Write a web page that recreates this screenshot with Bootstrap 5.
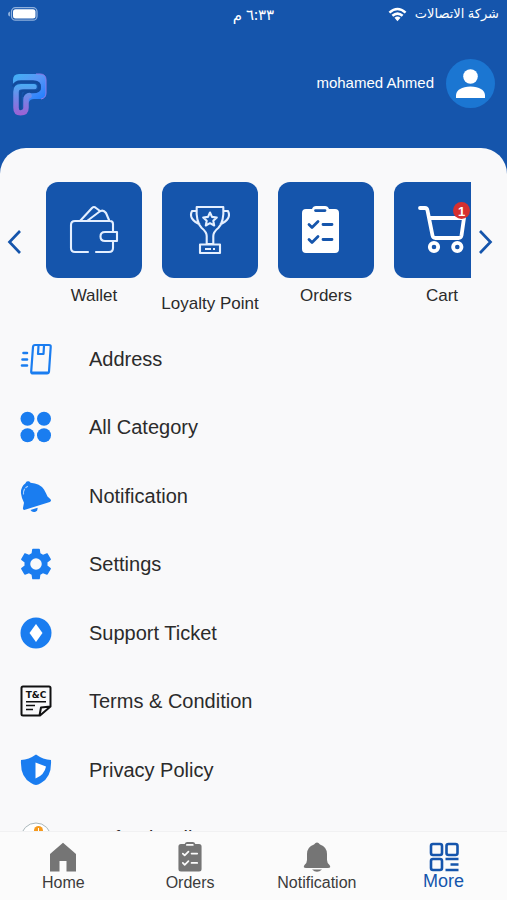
<!DOCTYPE html>
<html lang="en">
<head>
<meta charset="utf-8">
<meta name="viewport" content="width=device-width, initial-scale=1">
<title>More</title>
<link href="https://cdn.jsdelivr.net/npm/bootstrap@5.3.0/dist/css/bootstrap.min.css" rel="stylesheet">
<style>
  :root { --brand: #1555ac; --accent: #1a7df0; --page: #f9f9fa; }
  body { font-family: "Liberation Sans", Arial, sans-serif; background: var(--page); color: #2b2b2b; }
  a { color: inherit; text-decoration: none; }
  svg { display: block; flex: none; overflow: visible; }
  .brand-bg { background: var(--brand); }
  .status-bar { height: 28px; padding: 0 8px; font-family: "Noto Sans", "DejaVu Sans", sans-serif; font-size: 13px; }
  .status-time { font-size: 15px; }
  .top-bar { height: 110px; padding: 0 12px; font-size: 15px; }
  .sheet { background: var(--page); border-radius: 26px 26px 0 0; padding-top: 34px; margin-top: 10px; }
  .arrow { color: var(--brand); width: 46px; height: 120px; padding: 0 0 0 8px; }
  .arrow-next { width: 36px; }
  .tiles { gap: 20px; height: 142px; }
  .tile { width: 96px; flex: none; font-size: 17px; line-height: 20px; }
  .tile-face { height: 96px; border-radius: 12px; margin-bottom: 8px; background: var(--brand); color: #fff; }
  .tile-low { margin-bottom: 16px; }
  .count { position: absolute; top: 20px; left: 59px; width: 17px; height: 17px; border-radius: 50%; background: #d5302f; font-size: 13px; font-weight: 700; line-height: 19px; }
  .menu-row { height: 69px; padding-left: 20px; gap: 37px; font-size: 20px; }
  .menu-row svg { color: var(--accent); }
  .menu li:nth-child(even) .menu-row { height: 68px; }
  .tabs { height: 69px; border-top: 1px solid #f1f1f2; background: #fbfbfb; font-size: 16px; line-height: 20px; color: #3c3c3c; }
  .tabs a { padding-top: 10px; }
  .tabs svg { color: #757575; margin-bottom: 1px; }
  .tabs .current { color: var(--brand); font-size: 18px; line-height: 18px; }
  .tabs .current svg { color: var(--brand); margin-bottom: 0; }
</style>
</head>
<body class="vh-100 d-flex flex-column overflow-hidden">
<svg width="0" height="0" class="position-absolute" aria-hidden="true">
  <symbol id="clipboard" viewBox="0 0 37 48">
    <path fill="currentColor" d="M4 3h6q1-3 4-3h9q3 0 4 3h6q4 0 4 4v36q0 4-4 4H4q-4 0-4-4V7q0-4 4-4z"/>
    <g fill="none" stroke="var(--hole)" stroke-width="2.8" stroke-linecap="round" stroke-linejoin="round"><path d="M13.500 4.600h9.500M7 18.500l3 3 6-6M21 18.500h9M7 33.500l3 3 6-6M21 33.500h9"/></g>
  </symbol>
</svg>

<header class="brand-bg text-white">
  <div class="status-bar row g-0 align-items-center" dir="rtl">
    <div class="col d-flex align-items-center gap-2" lang="ar">
      <span>شركة الاتصالات</span>
      <svg width="19" height="15" viewBox="0 0 20 15" fill="none" stroke="#fff" stroke-width="2.700"><path d="M1.500 5.500Q10-2 18.500 5.500M4.600 8.800q5.400-4.600 10.800 0"/><path fill="#fff" stroke="none" d="M10 14.500 6.800 11q3.200-2.600 6.400 0z"/></svg>
    </div>
    <div class="col-auto status-time" lang="ar">٦:٣٣ م</div>
    <div class="col d-flex justify-content-end">
      <svg width="30" height="14" viewBox="0 0 30 14"><rect x="3.500" y=".7" width="25.500" height="12.500" rx="4" fill="none" stroke="#8fb0dc" stroke-width="1.300"/><rect x="5" y="2.300" width="22.500" height="9.300" rx="2.500" fill="#fff"/><path d="M2 4.500v5Q0 9 0 7t2-2.500z" fill="#8fb0dc"/></svg>
    </div>
  </div>
  <div class="top-bar d-flex align-items-center justify-content-between">
    <svg width="36" height="44" viewBox="0 0 36 44" class="mt-4" role="img" aria-label="P">
      <defs>
        <linearGradient id="lg1" x1="0" y1="0" x2=".7" y2="1"><stop offset="0" stop-color="#3fb2f5"/><stop offset=".45" stop-color="#5a96f6"/><stop offset="1" stop-color="#1c7cff"/></linearGradient>
        <linearGradient id="lg2" gradientUnits="userSpaceOnUse" x1="0" y1="9" x2="0" y2="43"><stop offset="0" stop-color="#45b1f6"/><stop offset=".5" stop-color="#7484e6"/><stop offset="1" stop-color="#a05fd2"/></linearGradient>
      </defs>
      <path fill="url(#lg1)" d="M1 12V7Q1 1 7 1h21q6 0 6 6v13q0 6-6 6h-6q-4 0-5 3l-5 5V25q0-6 6-6h7q4 0 4-4v-1q0-6-6-6H9Q4 8 1 12z"/>
      <path fill="none" stroke="#8d7cea" stroke-width="1" d="M24 1h4q6 0 6 6v13q0 5-5 6"/>
      <path fill="none" stroke="#124a9c" stroke-width="2.600" d="M1 13.500Q3 8.500 9 8.500h12q6.500 0 6.500 5.200T21 19h-4q-5 0-5.500 5"/>
      <path fill="none" stroke="url(#lg2)" stroke-width="5.500" stroke-linecap="round" stroke-linejoin="round" d="M22 13.700H9q-5 0-5 5v16q0 5 4.500 5 5.500 0 5.500-5v-8q0-3 3-4"/>
      <path fill="none" stroke="#124a9c" stroke-width="2.400" stroke-linecap="round" d="M23 17.600H12q-3.500 0-3.500 3.500v15"/>
    </svg>
    <a href="#" class="d-flex align-items-center gap-2">
      <span class="me-1">mohamed Ahmed</span>
      <svg width="49" height="49" viewBox="0 0 49 49"><circle cx="24.500" cy="24.500" r="24.500" fill="#1b76d2"/><circle cx="24.500" cy="17.500" r="7.300" fill="#fff"/><path fill="#fff" d="M10 39v-3q1-8 14.500-8.500Q38 28 39 36v3z"/></svg>
    </a>
  </div>
</header>

<main class="brand-bg flex-fill overflow-hidden">
  <div class="sheet">
    <section class="d-flex align-items-start" aria-label="Shortcuts">
      <button type="button" class="btn arrow border-0 rounded-0 flex-shrink-0 d-flex align-items-center" aria-label="Previous"><svg width="13" height="24" viewBox="0 0 13 24" fill="none" stroke="currentColor" stroke-width="2.700"><path d="M12 1 1.500 12 12 23"/></svg></button>
      <div class="tiles d-flex flex-fill overflow-hidden text-center text-nowrap">
        <a href="#" class="tile"><div class="tile-face d-flex align-items-center justify-content-center">
          <svg width="48" height="48" viewBox="0 0 48 48" fill="none" stroke="#e4efff" stroke-width="2.100" stroke-linecap="round" stroke-linejoin="round"><path d="M18 46H5q-4 0-4-4V19q0-4 4-4h35q3 0 3 3v8M43 35v7q0 4-4 4H26M47 26v9H35q-4.500 0-4.500-4.500T35 26zM10 15 22 2q2-2 4 0l4 3M17 15 29 6q4-3 7 1l3 7"/></svg></div>Wallet</a>
        <a href="#" class="tile"><div class="tile-face tile-low d-flex align-items-center justify-content-center">
          <svg width="48" height="48" viewBox="0 0 48 48" fill="none" stroke="#e4efff" stroke-width="2.100" stroke-linejoin="round"><path d="M10.700 1h26.600q1 15-5 21-5 4-5 8v8h-6.600v-8q0-4-5-8-6-6-5-21zM10.700 5H6Q2 13 14 18.500M37.300 5H42q4 8-8 13.500M14 38.500h20V47H14zM24 6.500l2 4.400 4.800.6-3.500 3.300.9 4.700-4.200-2.300-4.200 2.300.9-4.700-3.500-3.300 4.800-.6z"/><path d="M19 43h6M27 43h2" stroke-width="2"/></svg></div><span class="d-flex justify-content-center">Loyalty Point</span></a>
        <a href="#" class="tile"><div class="tile-face d-flex align-items-center justify-content-center">
          <svg width="48" height="48" viewBox="0 0 48 48"><use href="#clipboard" width="37" height="48" style="--hole:#1555ac"/></svg></div>Orders</a>
        <a href="#" class="tile"><div class="tile-face d-flex align-items-center justify-content-center position-relative">
          <svg width="48" height="48" viewBox="0 0 48 48" fill="none" stroke="#fff" stroke-width="3.800" stroke-linecap="round" stroke-linejoin="round"><path d="M2 2h5q2 0 2.500 2.500l5 25q.5 2.500 3 2.500h23q2.500 0 3-2.500L46 12H11"/><circle cx="16" cy="41" r="4.200"/><circle cx="39.300" cy="41" r="4.200"/></svg>
          <span class="count">1</span></div>Cart</a>
      </div>
      <button type="button" class="btn arrow arrow-next border-0 rounded-0 flex-shrink-0 d-flex align-items-center" aria-label="Next"><svg width="13" height="24" viewBox="0 0 13 24" fill="none" stroke="currentColor" stroke-width="2.700"><path d="M1 1l10.500 11L1 23"/></svg></button>
    </section>

    <ul class="menu list-unstyled mb-0">
      <li><a href="#" class="menu-row d-flex align-items-center"><svg width="32" height="32" viewBox="0 0 32 32" fill="none" stroke="currentColor" stroke-width="2.200" stroke-linejoin="round" stroke-linecap="round"><path d="M15 2h14q2 0 1.700 2L29 28.500q-.2 2-2 2H13q-2 0-1.800-2L13 4q.2-2 2-2zM12 29.500h16.500M18.500 3 18 11h5.500L24 3"/><path stroke-width="2.600" d="M3.500 10H7M2.500 16.500H7M2 22.500h5"/></svg>Address</a></li>
      <li><a href="#" class="menu-row d-flex align-items-center"><svg width="32" height="32" viewBox="0 0 32 32" fill="currentColor"><circle cx="7.500" cy="7.800" r="7"/><circle cx="24" cy="7.800" r="7"/><circle cx="7.500" cy="24.200" r="7"/><circle cx="24" cy="24.200" r="7"/></svg>All Category</a></li>
      <li><a href="#" class="menu-row d-flex align-items-center"><svg width="32" height="32" viewBox="0 0 32 32" fill="currentColor"><path d="M5.500 3.300Q6 .8 8.500 1.200q1.500.3 2 1.600Q20 3.500 24 9.500q2 3.500 3.500 7l3 2.700q1.300 1.800-.7 2.700L5 29.800q-2.500.5-2-2l1-5Q1.500 18 1 13.500.5 7 5.500 3.300z"/><path d="m10.500 30 7-2.300q.5 3-2 4-3.500 1-5-1.700z"/><path d="M3.500 14Q3 9 7.500 6.500" fill="none" stroke="#a7d0ff" stroke-width="1.200" stroke-linecap="round" stroke-dasharray="5 2"/></svg>Notification</a></li>
      <li><a href="#" class="menu-row d-flex align-items-center"><svg width="32" height="32" viewBox="2.200 2 19.600 20" fill="currentColor"><path d="M19.140 12.940c.04-.3.060-.61.060-.94 0-.32-.02-.64-.07-.94l2.030-1.580c.18-.14.230-.41.120-.61l-1.920-3.320c-.12-.22-.37-.29-.59-.22l-2.390.96c-.5-.38-1.030-.7-1.620-.94l-.36-2.540c-.04-.24-.24-.41-.48-.41h-3.840c-.24 0-.43.170-.47.410l-.36 2.540c-.59.240-1.130.570-1.620.94l-2.390-.96c-.22-.08-.47 0-.59.220L2.740 8.870c-.12.210-.08.470.12.610l2.030 1.580c-.05.3-.09.630-.09.94s.02.640.07.94l-2.030 1.580c-.18.140-.23.410-.12.610l1.920 3.320c.12.220.37.290.59.220l2.390-.96c.5.380 1.030.7 1.620.94l.36 2.540c.05.240.24.410.48.410h3.840c.24 0 .44-.17.470-.41l.36-2.540c.59-.24 1.130-.56 1.620-.94l2.390.96c.22.080.47 0 .59-.22l1.920-3.320c.12-.22.070-.47-.12-.61zM12 15.600A3.600 3.600 0 1 1 12 8.400a3.600 3.600 0 0 1 0 7.200z"/></svg>Settings</a></li>
      <li><a href="#" class="menu-row d-flex align-items-center"><svg width="32" height="32" viewBox="0 0 32 32"><circle cx="16" cy="16" r="15.500" fill="currentColor"/><path fill="#fff" d="m16 7 6.500 9L16 25l-6.500-9z"/></svg>Support Ticket</a></li>
      <li><a href="#" class="menu-row d-flex align-items-center"><svg width="32" height="32" viewBox="0 0 32 32" fill="none" stroke="#111" stroke-width="2" stroke-linejoin="round"><path d="M3 1.500h26q1.500 0 1.500 1.500v18.500L20 30.500H3Q1.500 30.500 1.500 29V3Q1.500 1.500 3 1.500zM19.500 30.500l1.500-8 9.500-1"/><path stroke-width="1.500" d="M6 16.700h20M6 20.500h9M6 24.500h7"/><text x="16" y="13" text-anchor="middle" font-size="9" font-weight="700" fill="#111" stroke="none" font-family="DejaVu Sans, sans-serif">T&amp;C</text></svg>Terms &amp; Condition</a></li>
      <li><a href="#" class="menu-row d-flex align-items-center"><svg width="32" height="32" viewBox="0 0 32 32"><path fill="currentColor" d="M16 .5Q23 5.500 31 6q1 17-10 23-3 2-5 2-2 0-5-2Q0 23 1 6 9 5.500 16 .5z"/><path fill="#fff" d="M15.500 8.500 26 12.500q-1.500 8.500-10.500 12z"/></svg>Privacy Policy</a></li>
      <li><a href="#" class="menu-row d-flex align-items-center"><svg width="32" height="32" viewBox="0 0 32 32"><circle cx="16" cy="16" r="15" fill="#fff" stroke="#a9b7bb" stroke-width="1"/><circle cx="18.500" cy="8.500" r="4.500" fill="#f69a1d"/><path d="M18.500 6v5" stroke="#fff"/></svg>Refund Policy</a></li>
    </ul>
  </div>
</main>

<nav class="tabs row g-0 text-center flex-shrink-0" aria-label="Main">
  <a href="#" class="col d-flex flex-column align-items-center"><svg width="30" height="30" viewBox="0 0 30 30"><path fill="currentColor" d="M15 .7 28 12v17.500h-9.500V19h-7v10.500H2V12z"/></svg>Home</a>
  <a href="#" class="col d-flex flex-column align-items-center"><svg width="30" height="30"><use href="#clipboard" width="30" height="30" style="--hole:#fbfbfb"/></svg>Orders</a>
  <a href="#" class="col d-flex flex-column align-items-center"><svg width="30" height="30" viewBox="0 0 30 30" fill="currentColor"><path d="M12 2.500q3-4 6 0Q25 5 25 12v6q0 3 2.500 5 2 3-1.500 3H4q-3.500 0-1.500-3Q5 21 5 18v-6q0-7 7-9.500zM10 27.500h10q-5 4.500-10 0z"/></svg>Notification</a>
  <a href="#" class="col d-flex flex-column align-items-center current" aria-current="page"><svg width="30" height="30" viewBox="0 0 30 30" fill="none" stroke="currentColor" stroke-width="2.600"><rect x="2" y="2" width="11" height="11" rx="2"/><rect x="17.500" y="2" width="11" height="11" rx="2"/><rect x="2" y="17" width="11" height="11" rx="2"/><path d="M16.500 17h13M21.500 22.500h8M16.500 28h13"/></svg>More</a>
</nav>
<script src="https://cdn.jsdelivr.net/npm/bootstrap@5.3.0/dist/js/bootstrap.bundle.min.js"></script>
</body>
</html>
